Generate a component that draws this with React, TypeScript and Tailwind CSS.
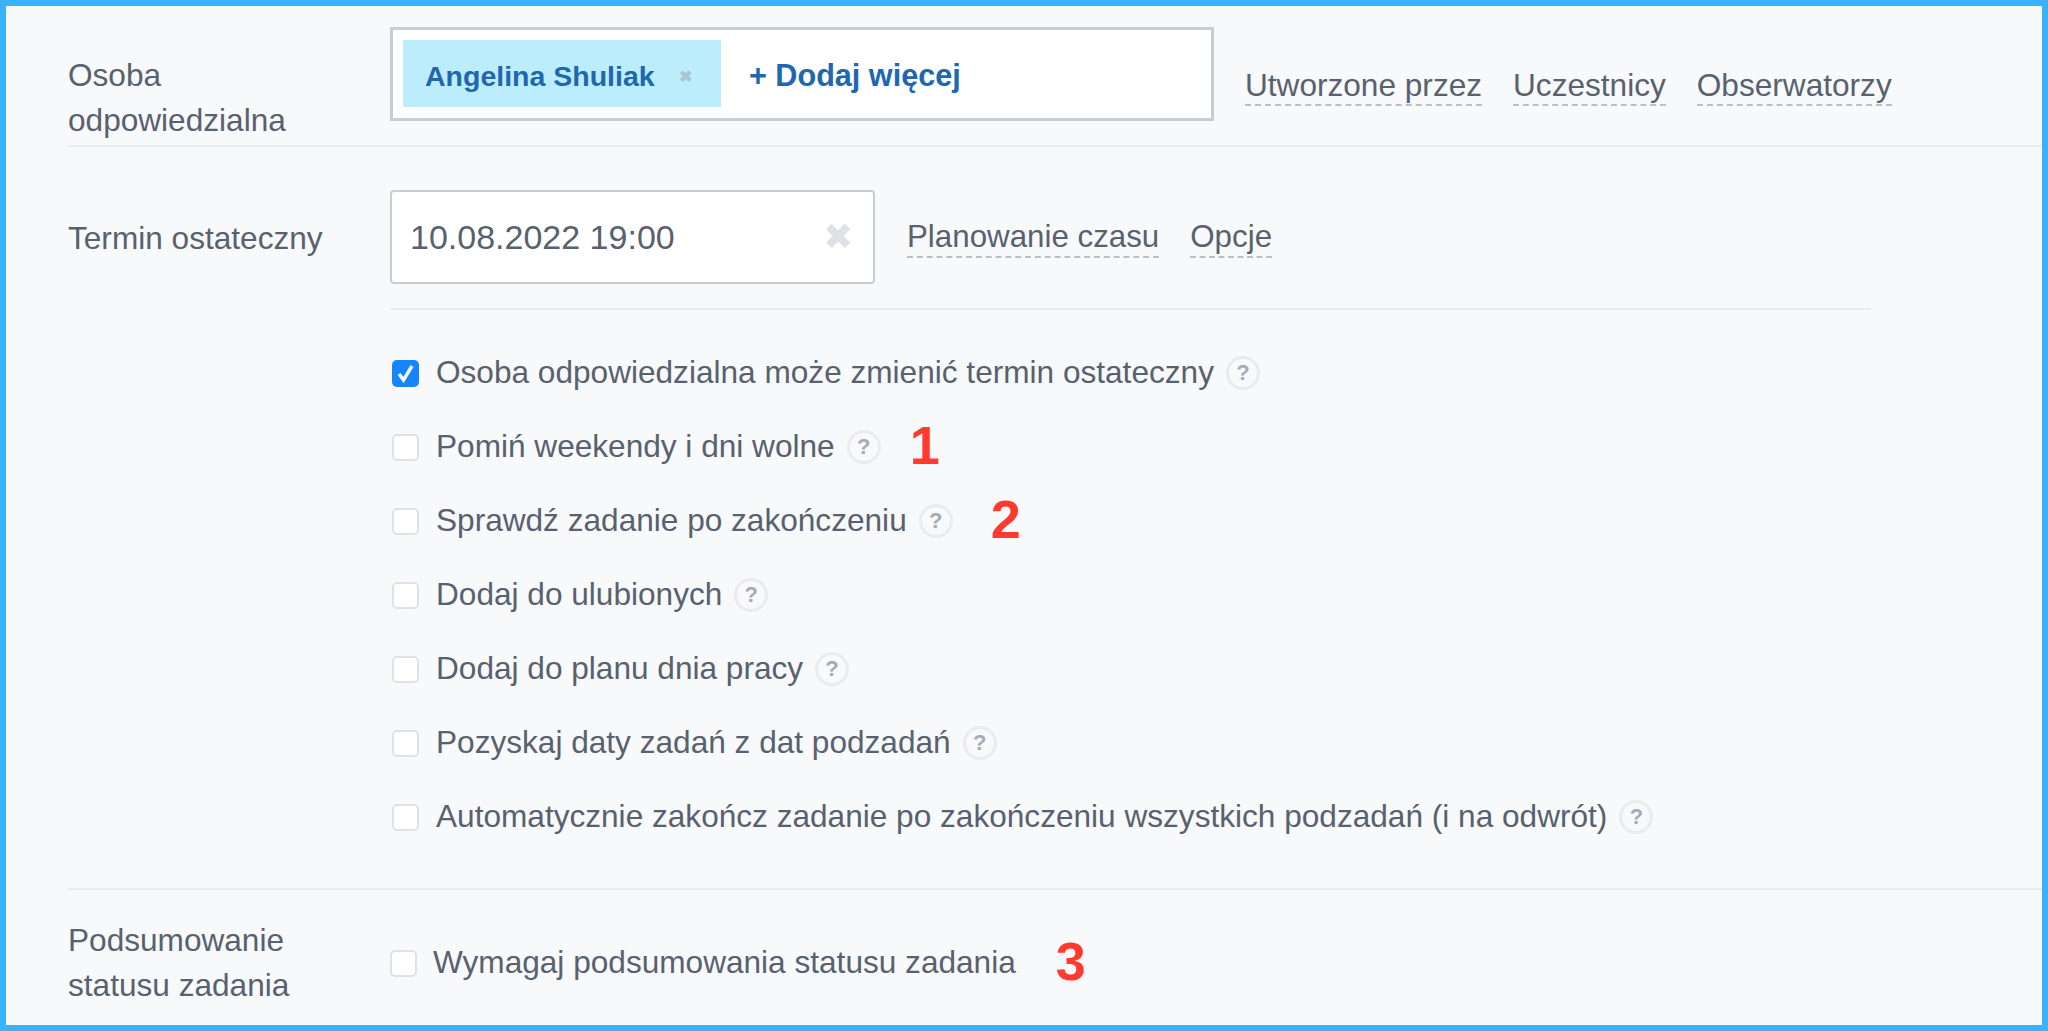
const font = { fontFamily: '"Liberation Sans", Arial, sans-serif' };

function Help() {
  return (
    <span className="ml-[12px] flex h-[34px] w-[34px] shrink-0 items-center justify-center rounded-full border-[3px] border-[#e9ebed] text-[22px] font-bold leading-none text-[#a4abb3]">
      ?
    </span>
  );
}

function Box({ checked }: { checked?: boolean }) {
  if (checked) {
    return (
      <span className="flex h-[27px] w-[27px] shrink-0 items-center justify-center rounded-[5px] bg-[#1585fb]">
        <svg width="19" height="19" viewBox="0 0 19 19" fill="none">
          <path d="M3 10l4.5 6L16 2" stroke="#fff" strokeWidth="3.4" />
        </svg>
      </span>
    );
  }
  return <span className="h-[27px] w-[27px] shrink-0 rounded-[5px] border-2 border-[#dfe2e5] bg-white" />;
}

function Row({ label, checked, num, numGap }: { label: string; checked?: boolean; num?: string; numGap?: string }) {
  return (
    <div className="flex h-[74px] items-center pl-[2px]">
      <Box checked={checked} />
      <span className="ml-[17px] text-[31.6px] text-[#58616e]">{label}</span>
      <Help />
      {num && <span className={`${numGap} -mt-[4px] text-[54px] font-bold leading-none text-[#ff3b30]`}>{num}</span>}
    </div>
  );
}

function Link({ children, small }: { children: string; small?: boolean }) {
  return (
    <span className={`border-b-2 border-dashed border-[#b9bfc6] text-[#58616e] ${small ? "text-[31.3px] leading-[38px]" : "text-[31.6px] leading-[38px]"}`}>{children}</span>
  );
}

export default function App() {
  const rows = [
    { label: "Osoba odpowiedzialna może zmienić termin ostateczny", checked: true },
    { label: "Pomiń weekendy i dni wolne", num: "1", numGap: "ml-[29px]" },
    { label: "Sprawdź zadanie po zakończeniu", num: "2", numGap: "ml-[38px]" },
    { label: "Dodaj do ulubionych" },
    { label: "Dodaj do planu dnia pracy" },
    { label: "Pozyskaj daty zadań z dat podzadań" },
    { label: "Automatycznie zakończ zadanie po zakończeniu wszystkich podzadań (i na odwrót)" },
  ];
  return (
    <div style={font} className="h-[1031px] w-[2048px] overflow-hidden border-x-[6px] border-b-[6px] border-t-[6px] border-[#38b3ff] bg-[#f8f9fb] text-[#58616e]">
      <div className="ml-[62px] flex h-[141px] items-start border-b-2 border-[#eaecee]">
        <div className="mt-[47px] w-[322px] text-[31.6px] leading-[45px]">Osoba<br />odpowiedzialna</div>
        <div className="mt-[21px] flex h-[94px] w-[824px] items-start border-[3px] border-[#c6cdd3] bg-white pl-[10px] pt-[10px]">
          <div className="flex h-[67px] w-[318px] items-center bg-[#bcedfc] pl-[22px] pt-[6px] text-[28.5px] font-bold text-[#2067b0]">
            Angelina Shuliak
            <span className="ml-[24px] text-[16px] leading-none text-[#a9c4d2]">✖</span>
          </div>
          <div className="ml-[28px] mt-[17px] text-[30.6px] font-bold leading-[36px] text-[#2067b0]">+ Dodaj więcej</div>
        </div>
        <div className="ml-[31px] mt-[60px] flex gap-[31px]">
          <Link>Utworzone przez</Link>
          <Link>Uczestnicy</Link>
          <Link>Obserwatorzy</Link>
        </div>
      </div>
      <div className="flex pl-[62px]">
        <div className="mt-[69px] w-[322px] text-[31.6px] leading-[45px]">Termin ostateczny</div>
        <div className="w-[1481px]">
          <div className="flex h-[163px] items-start border-b-2 border-[#eaecee]">
            <div className="mt-[43px] flex h-[94px] w-[485px] items-center justify-between rounded-[4px] border-2 border-[#c6cdd3] bg-white pl-[18px] pr-[20px] text-[34px] text-[#58616e]">
              10.08.2022 19:00
              <span className="text-[36px] leading-none text-[#dfe2e5]">✖</span>
            </div>
            <div className="ml-[32px] mt-[71px] flex gap-[31px]">
              <Link small>Planowanie czasu</Link>
              <Link small>Opcje</Link>
            </div>
          </div>
          <div className="pt-[26px]">
            {rows.map((r) => (
              <Row key={r.label} {...r} />
            ))}
          </div>
        </div>
      </div>
      <div className="ml-[62px] mt-[34px] flex items-center border-t-2 border-[#eaecee] pt-[28px]">
        <div className="w-[322px] text-[31.6px] leading-[45px]">Podsumowanie<br />statusu zadania</div>
        <Box />
        <span className="ml-[16px] text-[31.6px] text-[#58616e]">Wymagaj podsumowania statusu zadania</span>
        <span className="-mt-[4px] ml-[40px] text-[54px] font-bold leading-none text-[#ff3b30]">3</span>
      </div>
    </div>
  );
}
